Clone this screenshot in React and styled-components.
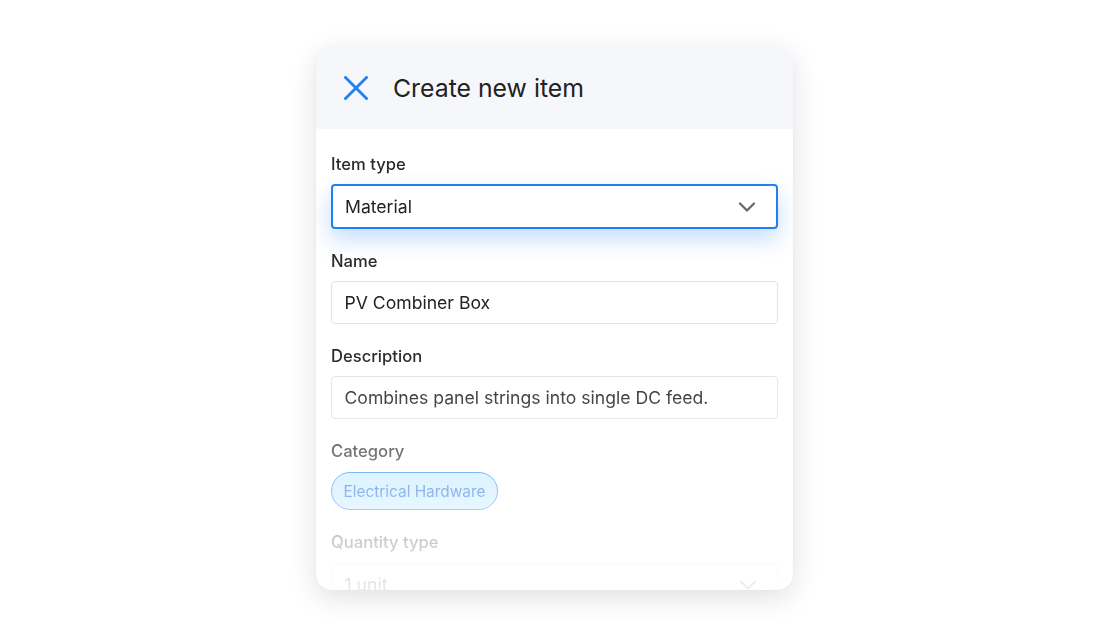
import React from 'react';
import styled, { createGlobalStyle } from 'styled-components';

const Global = createGlobalStyle`
  html, body {
    margin: 0;
    padding: 0;
    background: #ffffff;
    font-family: Inter, "Noto Sans", sans-serif;
  }
`;

const Page = styled.div`
  height: 636px;
  display: flex;
  align-items: center;
  justify-content: center;
  padding-right: 1px;
`;

const Card = styled.div`
  width: 477px;
  height: 544px;
  background: #fff;
  border-radius: 16px;
  overflow: hidden;
  box-shadow: 0 8px 28px rgba(0, 0, 0, 0.12), 0 0 2px rgba(0, 0, 0, 0.04);
  display: flex;
  flex-direction: column;
`;

const Header = styled.div`
  height: 83px;
  flex-shrink: 0;
  background: #f6f7fa;
  display: flex;
  align-items: center;
  gap: 25px;
  padding-left: 28px;
`;

const CloseButton = styled.button`
  width: 24px;
  height: 24px;
  padding: 0;
  border: none;
  background: none;
  display: flex;
  align-items: center;
  justify-content: center;
  cursor: pointer;
`;

const Title = styled.h1`
  margin: 0;
  font-size: 24.8px;
  font-weight: 400;
  color: #222;
`;

const fade = `linear-gradient(to bottom, #000 0, #000 225px, rgba(0, 0, 0, 0.66) 323px, rgba(0, 0, 0, 0.5) 362px, rgba(0, 0, 0, 0.24) 413px, rgba(0, 0, 0, 0.1) 461px)`;

const Body = styled.div`
  flex: 1;
  padding: 25px 15px 0;
  display: flex;
  flex-direction: column;
  gap: 22px;
  -webkit-mask-image: ${fade};
  mask-image: ${fade};
`;

const Field = styled.div`
  display: flex;
  flex-direction: column;
  gap: ${({ $gap }) => $gap || '10px'};
`;

const Label = styled.label`
  font-size: 16.6px;
  line-height: 20px;
  font-weight: 500;
  color: #2a2a2a;
`;

const Box = styled.div`
  box-sizing: border-box;
  height: ${({ $focused }) => ($focused ? '45px' : '43px')};
  border: ${({ $focused }) => ($focused ? '2px solid #1f80f3' : '1.5px solid #e1e3e6')};
  border-radius: 4px;
  background: #fff;
  display: flex;
  align-items: center;
  justify-content: space-between;
  padding: 0 20px 0 ${({ $focused }) => ($focused ? '12px' : '12.5px')};
  font-size: 17.6px;
  color: #222;
  box-shadow: ${({ $focused }) => ($focused ? '0 10px 22px rgba(40, 130, 245, 0.28)' : 'none')};
`;

const Chips = styled.div`
  display: flex;
  gap: 8px;
`;

const Chip = styled.span`
  box-sizing: border-box;
  height: 38px;
  padding: 0 11.5px;
  border-radius: 19px;
  border: 1.5px solid #1e86f7;
  background: #c4ebff;
  color: #1b6ade;
  font-size: 15.4px;
  display: flex;
  align-items: center;
`;

const Chevron = () => (
  <svg width="18" height="10" viewBox="0 0 18 10" fill="none">
    <path d="M2 1.5l7 7 7-7" stroke="#666" strokeWidth="2.2" strokeLinecap="round" strokeLinejoin="round" />
  </svg>
);

export default function App() {
  return (
    <>
      <Global />
      <Page>
        <Card>
          <Header>
            <CloseButton aria-label="Close">
              <svg width="24" height="24" viewBox="0 0 24 24" fill="none">
                <path d="M1.5 1.5l21 21M22.5 1.5l-21 21" stroke="#2584f2" strokeWidth="3" strokeLinecap="round" />
              </svg>
            </CloseButton>
            <Title>Create new item</Title>
          </Header>
          <Body>
            <Field>
              <Label>Item type</Label>
              <Box $focused>
                Material
                <Chevron />
              </Box>
            </Field>
            <Field>
              <Label>Name</Label>
              <Box>PV Combiner Box</Box>
            </Field>
            <Field>
              <Label>Description</Label>
              <Box>Combines panel strings into single DC feed.</Box>
            </Field>
            <Field $gap="11px">
              <Label>Category</Label>
              <Chips>
                <Chip>Electrical Hardware</Chip>
              </Chips>
            </Field>
            <Field $gap="11px">
              <Label>Quantity type</Label>
              <Box>
                1 unit
                <Chevron />
              </Box>
            </Field>
          </Body>
        </Card>
      </Page>
    </>
  );
}
